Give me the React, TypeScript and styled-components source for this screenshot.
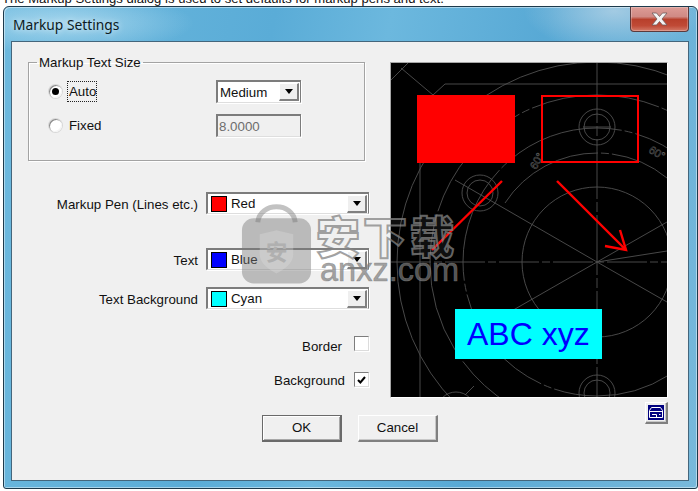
import React from "react";
import styled, { createGlobalStyle } from "styled-components";

const Global = createGlobalStyle`
  html, body { margin: 0; padding: 0; background: #fff; }
  * { box-sizing: border-box; }
`;

const Page = styled.div`
  position: relative;
  width: 698px;
  height: 491px;
  overflow: hidden;
  background: #fff;
  font-family: "Liberation Sans", Arial, sans-serif;
  font-size: 13.3px;
  color: #111;
`;

const Caption = styled.div`
  height: 6px;
  padding-left: 2px;
  font-size: 13.1px;
  line-height: 0;
  white-space: nowrap;
  color: #111;
  overflow: hidden;
  & > span { display: block; transform: translateY(-1px); }
`;

const Win = styled.div`
  margin-left: 3px;
  width: 695px;
  height: 483px;
  display: flex;
  flex-direction: column;
  padding: 0 8px 7px 7px;
  border: 1px solid #1d3a4c;
  border-radius: 6px 6px 3px 3px;
  background:
    radial-gradient(ellipse 130px 30px at 60px 16px, rgba(205, 235, 248, 0.6), rgba(205, 235, 248, 0) 100%),
    radial-gradient(ellipse 90px 40px at 610px 4px, rgba(190, 215, 232, 0.7), rgba(190, 215, 232, 0) 100%),
    linear-gradient(100deg, #6db9de 0%, #5aacd7 35%, #6cb8de 50%, #58a9d5 70%, #78b9db 100%);
  box-shadow: inset 1px 1px 0 rgba(255, 255, 255, 0.45), inset -1px -1px 0 rgba(255, 255, 255, 0.45);
`;

const TitleBar = styled.div`
  flex: none;
  height: 34px;
  display: flex;
  justify-content: space-between;
  align-items: flex-start;
`;

const Title = styled.div`
  padding: 9px 0 0 2px;
  font-family: "Noto Sans", "Open Sans", sans-serif;
  font-size: 13.8px;
  line-height: 18px;
  color: #0c1a22;
  text-shadow: 0 0 6px rgba(255, 255, 255, 0.8);
`;

const CloseBtn = styled.div`
  width: 59px;
  height: 25px;
  display: flex;
  align-items: center;
  justify-content: center;
  border: 1px solid #5b3a3c;
  border-top: none;
  border-radius: 0 0 4px 4px;
  background: linear-gradient(#dd9c96 0%, #d08a84 40%, #b8402c 52%, #c04a36 78%, #d27a68 100%);
  box-shadow: inset 0 0 0 1px rgba(255, 255, 255, 0.25);
`;

const Client = styled.div`
  flex: 1;
  display: grid;
  grid-template-columns: 341px 278px;
  grid-template-rows: 336px auto;
  column-gap: 21px;
  align-content: start;
  padding: 20px 0 0 16px;
  background: #f0f0f0;
  border: 1px solid #44667c;
`;

const LeftColumn = styled.div`
  display: flex;
  flex-direction: column;
`;

const GroupBox = styled.fieldset`
  width: 337px;
  height: 106px;
  margin: -7px 0 0;
  padding: 10px 0 0 20px;
  border: 1px solid #a3a3a3;
  box-shadow: 1px 1px 0 #fff, inset 1px 1px 0 #fff;
`;

const GroupLegend = styled.legend`
  margin-left: -12px;
  padding: 0 2px;
  line-height: 15px;
  color: #111;
`;

const SizeGrid = styled.div`
  display: grid;
  grid-template-columns: 167px 85px;
  grid-auto-rows: 23px;
  row-gap: 11px;
  align-items: center;
`;

const RadioRow = styled.div`
  display: flex;
  align-items: center;
  gap: 6px;
`;

const RadioDot = styled.span<{ $on?: boolean }>`
  width: 13px;
  height: 13px;
  border-radius: 50%;
  display: flex;
  align-items: center;
  justify-content: center;
  background: #fff;
  box-shadow: inset 1px 1px 0 #8c8c8c, inset -1px -1px 0 #f4f4f4, 0 0 0 1px #d8d8d8;
  &::after {
    content: "";
    width: 7px;
    height: 7px;
    border-radius: 50%;
    background: ${(p) => (p.$on ? "#000" : "transparent")};
  }
`;

const RadioLabel = styled.span<{ $focus?: boolean }>`
  padding: 2px 0 2px 1px;
  line-height: 15px;
  outline: ${(p) => (p.$focus ? "1px dotted #222" : "none")};
  margin-top: -1px;
`;

const Sunken = styled.div`
  display: flex;
  align-items: center;
  border-style: solid;
  border-width: 2px 1px 1px 2px;
  border-color: #7c7c7c #7c7c7c #dedede #7c7c7c;
  box-shadow: 1px 1px 0 #fff;
`;

const SmallCombo = styled(Sunken)`
  width: 85px;
  height: 23px;
  background: #fff;
  padding-left: 2px;
  justify-content: space-between;
`;

const FixedInput = styled(Sunken)`
  width: 85px;
  height: 23px;
  padding-left: 1px;
  color: #6d6d6d;
  background: #f0f0f0;
`;

const DropBtn = styled.span`
  flex: none;
  width: 20px;
  height: 18px;
  margin-right: 1px;
  display: flex;
  align-items: center;
  justify-content: center;
  background: #efefef;
  border-style: solid;
  border-width: 1px 2px 2px 1px;
  border-color: #fff #808080 #808080 #fff;
  &::after {
    content: "";
    border-style: solid;
    border-width: 5px 4.5px 0 4.5px;
    border-color: #000 transparent transparent transparent;
  }
`;

const FieldRow = styled.div<{ $top: number }>`
  display: grid;
  grid-template-columns: 170px 163px;
  column-gap: 8px;
  align-items: center;
  margin-top: ${(p) => p.$top}px;
`;

const FieldLabel = styled.span`
  text-align: right;
  line-height: 15px;
  padding-top: 2px;
`;

const ColorCombo = styled(Sunken)`
  height: 22px;
  background: #fff;
  padding-left: 3px;
`;

const Swatch = styled.span<{ $color: string }>`
  flex: none;
  width: 16px;
  height: 16px;
  background: ${(p) => p.$color};
  border: 1px solid #000;
  margin-right: 4px;
`;

const ComboText = styled.span`
  flex: 1;
  line-height: 15px;
  margin-top: -1px;
`;

const CheckRow = styled.div<{ $top: number }>`
  display: flex;
  justify-content: flex-end;
  align-items: center;
  gap: 9px;
  height: 15px;
  margin-top: ${(p) => p.$top}px;
`;

const CheckLabel = styled.span<{ $shift: number; $end?: number }>`
  line-height: 15px;
  margin-top: ${(p) => p.$shift}px;
  margin-right: ${(p) => p.$end ?? 0}px;
`;

const CheckBox = styled.span`
  width: 15px;
  height: 15px;
  display: flex;
  align-items: center;
  justify-content: center;
  background: #fff;
  border-style: solid;
  border-width: 1px;
  border-color: #7d7d7d #dcdcdc #dcdcdc #7d7d7d;
  box-shadow: 1px 1px 0 #fff;
`;

const Canvas = styled.div`
  width: 278px;
  height: 336px;
  background: #000;
  border-style: solid;
  border-width: 1px;
  border-color: #a6a6a6 #fff #fff #a6a6a6;
  & > svg { display: block; }
`;

const Footer = styled.div`
  grid-column: 1 / -1;
  display: flex;
  align-items: flex-start;
  padding-left: 234px;
  width: 640px;
`;

const Button = styled.div<{ $default?: boolean }>`
  width: 80px;
  height: 27px;
  margin-top: 17px;
  padding-bottom: 1px;
  display: flex;
  align-items: center;
  justify-content: center;
  line-height: 15px;
  background: #f0f0f0;
  border-style: solid;
  border-width: 1px 2px 2px 1px;
  border-color: ${(p) =>
    p.$default ? "#6a6a6a #6a6a6a #6a6a6a #6a6a6a" : "#fff #808080 #808080 #fff"};
  box-shadow: ${(p) =>
    p.$default
      ? "inset 1px 1px 0 #fff, inset -1px -1px 0 #a8a8a8"
      : "inset -1px -1px 0 #c8c8c8"};
  & + & { margin-left: 16px; }
`;

const ToolButton = styled.div`
  width: 23px;
  height: 22px;
  margin: 4px 0 0 auto;
  display: flex;
  align-items: center;
  justify-content: center;
  background: #f0f0f0;
  border-style: solid;
  border-width: 1px 2px 2px 1px;
  border-color: #fff #808080 #808080 #fff;
  box-shadow: inset -1px -1px 0 #c8c8c8;
`;

const Watermark = styled.div`
  position: absolute;
  left: 240px;
  top: 202px;
  width: 220px;
  height: 86px;
  display: flex;
  pointer-events: none;
`;

const WatermarkWords = styled.div`
  margin-left: 3px;
  padding-top: 11px;
  width: 146px;
`;

const WatermarkCn = styled.div`
  font-family: "Noto Sans CJK SC", sans-serif;
  font-weight: 900;
  font-size: 44px;
  line-height: 44px;
  letter-spacing: 3px;
  white-space: nowrap;
  color: rgba(255, 255, 255, 0.06);
  -webkit-text-stroke: 2px rgba(132, 132, 132, 0.75);
`;

const WatermarkEn = styled.div`
  font-family: "Liberation Sans", sans-serif;
  font-size: 32.5px;
  line-height: 28px;
  margin: -1px 0 0 4px;
  -webkit-text-stroke: 0.6px rgba(125, 125, 125, 0.7);
  color: rgba(125, 125, 125, 0.7);
  white-space: nowrap;
`;

const ChartLabel = styled.text`
  font-family: "Liberation Sans", sans-serif;
  font-size: 11px;
  fill: none;
  stroke: #5a5a5a;
  stroke-width: 0.5px;
`;

const MarkupText = styled.text`
  font-family: "Liberation Sans", Arial, sans-serif;
  font-size: 32px;
  fill: #0000ff;
`;

const ShieldText = styled.text`
  font-family: "Noto Sans CJK SC", sans-serif;
  font-size: 22px;
  font-weight: 700;
  fill: #b0b0b0;
`;

const cx = 597;
const cy = 262;

const Drawing = () => (
  <svg width={276} height={334} viewBox="391 63 276 334">
    <g fill="none" stroke="#505050" strokeWidth={0.9}>
      <circle cx={cx} cy={cy} r={75} />
      <path d="M505 203A110 110 0 0 1 667 178" strokeDasharray="110 3 8 3" />
      <circle cx={cx} cy={cy} r={134} strokeDasharray="120 3 8 3" />
      <circle cx={cx} cy={cy} r={167} strokeDasharray="130 3 8 3" />
      <circle cx={cx} cy={cy} r={200} />
      <circle cx={cx} cy={127} r={18} />
      <circle cx={cx} cy={127} r={13} />
      <circle cx={480} cy={193} r={18} />
      <circle cx={480} cy={193} r={13} />
      <circle cx={cx} cy={393} r={18} />
      <circle cx={cx} cy={393} r={13} />
      <circle cx={456} cy={411} r={19} />
      <path d="M391 262H667" strokeDasharray="40 3 8 3" />
      <path d="M597 63V397" strokeDasharray="60 3 10 3" />
      <path d="M420 163V397" />
      <path d="M667 84H445L433 95" />
      <path d="M401 68L433 95M391 80L408 63" />
      <path d="M455 180L597 262L667 302" />
      <path d="M597 262L667 222" />
      <path d="M597 262L667 251" />
      <path d="M597 262L522 305L470 335" />
      <path d="M474 386L465 395" />
      <path d="M583 127H611" />
    </g>
    <ChartLabel transform="translate(536 170) rotate(-60)">60°</ChartLabel>
    <ChartLabel transform="translate(648 152) rotate(30)">60°</ChartLabel>
    <rect x={417} y={95} width={98} height={68} fill="#ff0000" />
    <rect x={542} y={96} width={96} height={66} fill="none" stroke="#ff0000" strokeWidth={2} />
    <g fill="none" stroke="#ff0000" strokeWidth={2.4}>
      <path d="M502 181L432 250" />
      <path d="M557 181L626 250" />
      <path d="M620 230L626 250L605 246" />
    </g>
    <rect x={455} y={309} width={147} height={50} fill="#00ffff" />
    <MarkupText x={467} y={345}>ABC xyz</MarkupText>
  </svg>
);

export default function App() {
  return (
    <Page>
      <Global />
      <Caption>
        <span>The Markup Settings dialog is used to set defaults for markup pens and text.</span>
      </Caption>
      <Win>
        <TitleBar>
          <Title>Markup Settings</Title>
          <CloseBtn>
            <svg width={17} height={14} viewBox="0 0 17 14">
              <path
                d="M1 1H5.5L8.5 4.5L11.5 1H16L11 7L16 13H11.5L8.5 9.5L5.5 13H1L6 7Z"
                fill="#f4f4f4"
                stroke="#6e5a5a"
                strokeWidth={0.8}
              />
            </svg>
          </CloseBtn>
        </TitleBar>
        <Client>
          <LeftColumn>
            <GroupBox>
              <GroupLegend>Markup Text Size</GroupLegend>
              <SizeGrid>
                <RadioRow>
                  <RadioDot $on />
                  <RadioLabel $focus>Auto</RadioLabel>
                </RadioRow>
                <SmallCombo>
                  <span>Medium</span>
                  <DropBtn />
                </SmallCombo>
                <RadioRow>
                  <RadioDot />
                  <RadioLabel>Fixed</RadioLabel>
                </RadioRow>
                <FixedInput>8.0000</FixedInput>
              </SizeGrid>
            </GroupBox>
            <FieldRow $top={31}>
              <FieldLabel>Markup Pen (Lines etc.)</FieldLabel>
              <ColorCombo>
                <Swatch $color="#ff0000" />
                <ComboText>Red</ComboText>
                <DropBtn />
              </ColorCombo>
            </FieldRow>
            <FieldRow $top={34}>
              <FieldLabel>Text</FieldLabel>
              <ColorCombo>
                <Swatch $color="#0000ff" />
                <ComboText>Blue</ComboText>
                <DropBtn />
              </ColorCombo>
            </FieldRow>
            <FieldRow $top={17}>
              <FieldLabel>Text Background</FieldLabel>
              <ColorCombo>
                <Swatch $color="#00ffff" />
                <ComboText>Cyan</ComboText>
                <DropBtn />
              </ColorCombo>
            </FieldRow>
            <CheckRow $top={27}>
              <CheckLabel $shift={6} $end={3}>Border</CheckLabel>
              <CheckBox />
            </CheckRow>
            <CheckRow $top={21}>
              <CheckLabel $shift={1}>Background</CheckLabel>
              <CheckBox>
                <svg width={9} height={8} viewBox="0 0 9 8">
                  <path d="M1 4L3.4 6.5L8 1" fill="none" stroke="#000" strokeWidth={2} />
                </svg>
              </CheckBox>
            </CheckRow>
          </LeftColumn>
          <Canvas>
            <Drawing />
          </Canvas>
          <Footer>
            <Button $default>OK</Button>
            <Button>Cancel</Button>
            <ToolButton>
              <svg width={16} height={15} viewBox="0 0 16 15">
                <rect width={16} height={15} fill="#000080" />
                <path d="M3.5 2.5H12.5L14.5 5.5V12.5H1.5V5.5Z" fill="none" stroke="#fff" strokeWidth={1} />
                <path d="M1.5 6.5H14.5M4 9.5H8.5V12.5M11 9.5H12.5" fill="none" stroke="#fff" strokeWidth={1} />
              </svg>
            </ToolButton>
          </Footer>
        </Client>
      </Win>
      <Watermark>
        <svg width={74} height={86} viewBox="0 0 74 86">
          <path d="M18 20C20 -1 54 -1 56 20" fill="none" stroke="rgba(120,120,120,0.45)" strokeWidth={5} />
          <rect x={2} y={16} width={70} height={66} rx={12} fill="rgba(120,120,120,0.45)" />
          <path d="M20 32L37 28L54 32V52C54 62 44 68 37 72C30 68 20 62 20 52Z" fill="rgba(225,225,225,0.3)" />
          <ShieldText x={26} y={58}>安</ShieldText>
        </svg>
        <WatermarkWords>
          <WatermarkCn>安下载</WatermarkCn>
          <WatermarkEn>anxz.com</WatermarkEn>
        </WatermarkWords>
      </Watermark>
    </Page>
  );
}
